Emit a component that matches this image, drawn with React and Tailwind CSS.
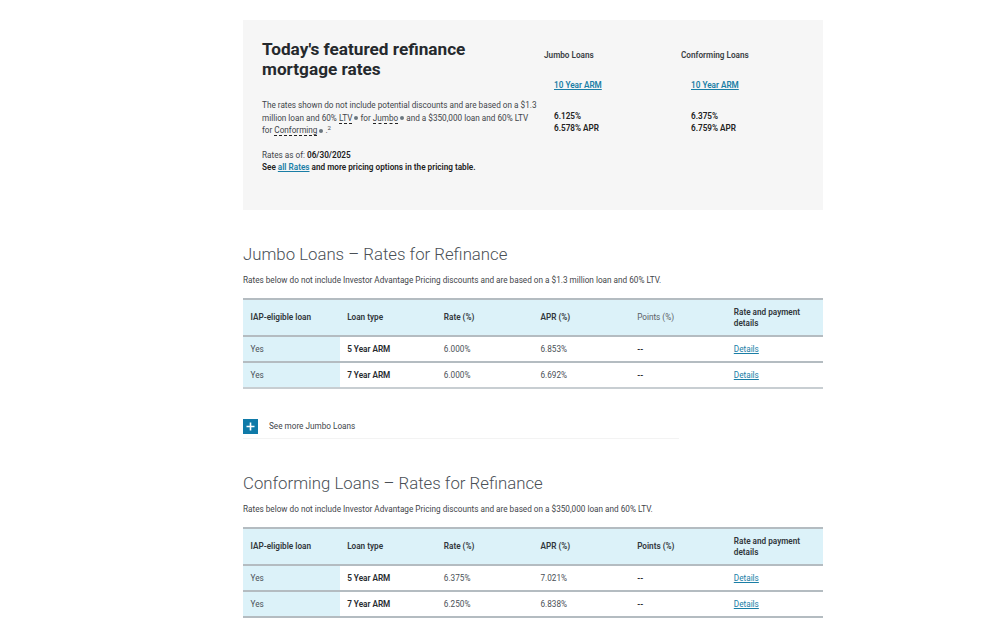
const jumboRows = [
  { type: "5 Year ARM", rate: "6.000%", apr: "6.853%" },
  { type: "7 Year ARM", rate: "6.000%", apr: "6.692%" },
]

const conformingRows = [
  { type: "5 Year ARM", rate: "6.375%", apr: "7.021%" },
  { type: "7 Year ARM", rate: "6.250%", apr: "6.838%" },
]

function Info() {
  return <span className="mx-[2px] inline-block h-[4px] w-[4px] rounded-full bg-[#6b7780] align-middle" />
}

function Dashed({ children }) {
  return <span className="border-b border-dashed border-[#222]">{children}</span>
}

function RateColumn({ title, rate, apr, className }) {
  return (
    <div className={className}>
      <p className="text-[8.2px] leading-3 font-semibold text-[#3a3f44]">{title}</p>
      <div className="mt-[18px] ml-[10px]">
        <a className="block text-[8.2px] leading-3 font-semibold text-[#1a7ea6] underline">10 Year ARM</a>
        <p className="mt-[19px] text-[8.2px] leading-3 font-semibold text-[#222]">{rate}</p>
        <p className="text-[8.2px] leading-3 font-semibold text-[#222]">{apr}</p>
      </div>
    </div>
  )
}

function RatesTable({ rows, boldPoints, bottom }) {
  const headCell = "pr-2 pl-[7.5px] text-left align-middle text-[8.2px] leading-[11px] font-semibold text-[#30363b]"
  const cell = "pr-2 pl-[7.5px] align-middle text-[8.2px] text-[#4a5056]"
  return (
    <table className="mt-[12px] w-full table-fixed border-collapse">
      <thead>
        <tr className="h-[37px] border-t-2 border-b-2 border-[#b4bcc1] bg-[#dcf2f9]">
          <th className={headCell}>IAP-eligible loan</th>
          <th className={headCell}>Loan type</th>
          <th className={headCell}>Rate (%)</th>
          <th className={headCell}>APR (%)</th>
          <th className={boldPoints ? headCell : "pr-2 pl-[7.5px] text-left align-middle text-[8.2px] font-normal text-[#5a6066]"}>Points (%)</th>
          <th className={headCell}>Rate and payment details</th>
        </tr>
      </thead>
      <tbody>
        {rows.map((row, i) => (
          <tr key={row.type} className={i === rows.length - 1 ? `h-[26px] border-b-2 ${bottom}` : "h-[26px] border-b-2 border-[#b4bcc1]"}>
            <td className={`${cell} bg-[#dcf2f9]`}>Yes</td>
            <td className="pr-2 pl-[7.5px] align-middle text-[8.2px] font-semibold text-[#25292d]">{row.type}</td>
            <td className={cell}>{row.rate}</td>
            <td className={cell}>{row.apr}</td>
            <td className="pr-2 pl-[7.5px] align-middle text-[8.2px] font-semibold text-[#25292d]">--</td>
            <td className="pr-2 pl-[7.5px] align-middle text-[8.2px]"><a className="text-[#1a7ea6] underline">Details</a></td>
          </tr>
        ))}
      </tbody>
    </table>
  )
}

export default function App() {
  return (
    <div className="h-[633px] overflow-hidden bg-white font-['Roboto',sans-serif]">
      <div className="ml-[243px] w-[580px] pt-5">
        <section className="flex h-[190px] bg-[#f6f6f6]">
          <div className="w-[290px] pt-[19px] pl-[19px]">
            <h2 className="text-[17.2px] leading-5 font-bold text-[#25292d]">Today's featured refinance mortgage rates</h2>
            <p className="mt-[20px] text-[8.2px] leading-[12.5px] whitespace-nowrap text-[#3f454a]">
              The rates shown do not include potential discounts and are based on a $1.3<br />
              million loan and 60% <Dashed>LTV</Dashed><Info />for <Dashed>Jumbo</Dashed><Info />and a $350,000 loan and 60% LTV<br />
              for <Dashed>Conforming</Dashed><Info />.<sup>2</sup>
            </p>
            <p className="mt-[12px] text-[8.2px] leading-[12.5px] text-[#3f454a]">
              Rates as of: <span className="font-semibold text-[#222]">06/30/2025</span>
            </p>
            <p className="text-[8.2px] leading-[12.5px] font-semibold text-[#222]">
              See <a className="text-[#1a7ea6] underline">all Rates</a> and more pricing options in the pricing table.
            </p>
          </div>
          <div className="flex pt-[29px] pl-[11px]">
            <RateColumn className="w-[137px]" title="Jumbo Loans" rate="6.125%" apr="6.578% APR" />
            <RateColumn className="w-[137px]" title="Conforming Loans" rate="6.375%" apr="6.759% APR" />
          </div>
        </section>

        <h2 className="mt-[32px] text-[16.8px] leading-6 font-light text-[#4a5056]">Jumbo Loans – Rates for Refinance</h2>
        <p className="mt-[8px] text-[8.2px] leading-3 text-[#3f454a]">Rates below do not include Investor Advantage Pricing discounts and are based on a $1.3 million loan and 60% LTV.</p>
        <RatesTable rows={jumboRows} bottom="border-[#c8ced2]" />

        <div className="mt-[30px] flex w-[436px] items-center gap-[11px] border-b border-[#f3f3f3] pb-[4px]">
          <span className="flex h-[15px] w-[15px] items-center justify-center bg-[#0f7aa8]">
            <svg width="9" height="9" viewBox="0 0 9 9"><path d="M4.5 0.5v8M0.5 4.5h8" stroke="#fff" strokeWidth="1.6" /></svg>
          </span>
          <span className="text-[8.2px] text-[#3f454a]">See more Jumbo Loans</span>
        </div>

        <h2 className="mt-[32px] text-[16.8px] leading-6 font-light text-[#4a5056]">Conforming Loans – Rates for Refinance</h2>
        <p className="mt-[8px] text-[8.2px] leading-3 text-[#3f454a]">Rates below do not include Investor Advantage Pricing discounts and are based on a $350,000 loan and 60% LTV.</p>
        <RatesTable rows={conformingRows} boldPoints bottom="border-[#b4bcc1]" />
      </div>
    </div>
  )
}
